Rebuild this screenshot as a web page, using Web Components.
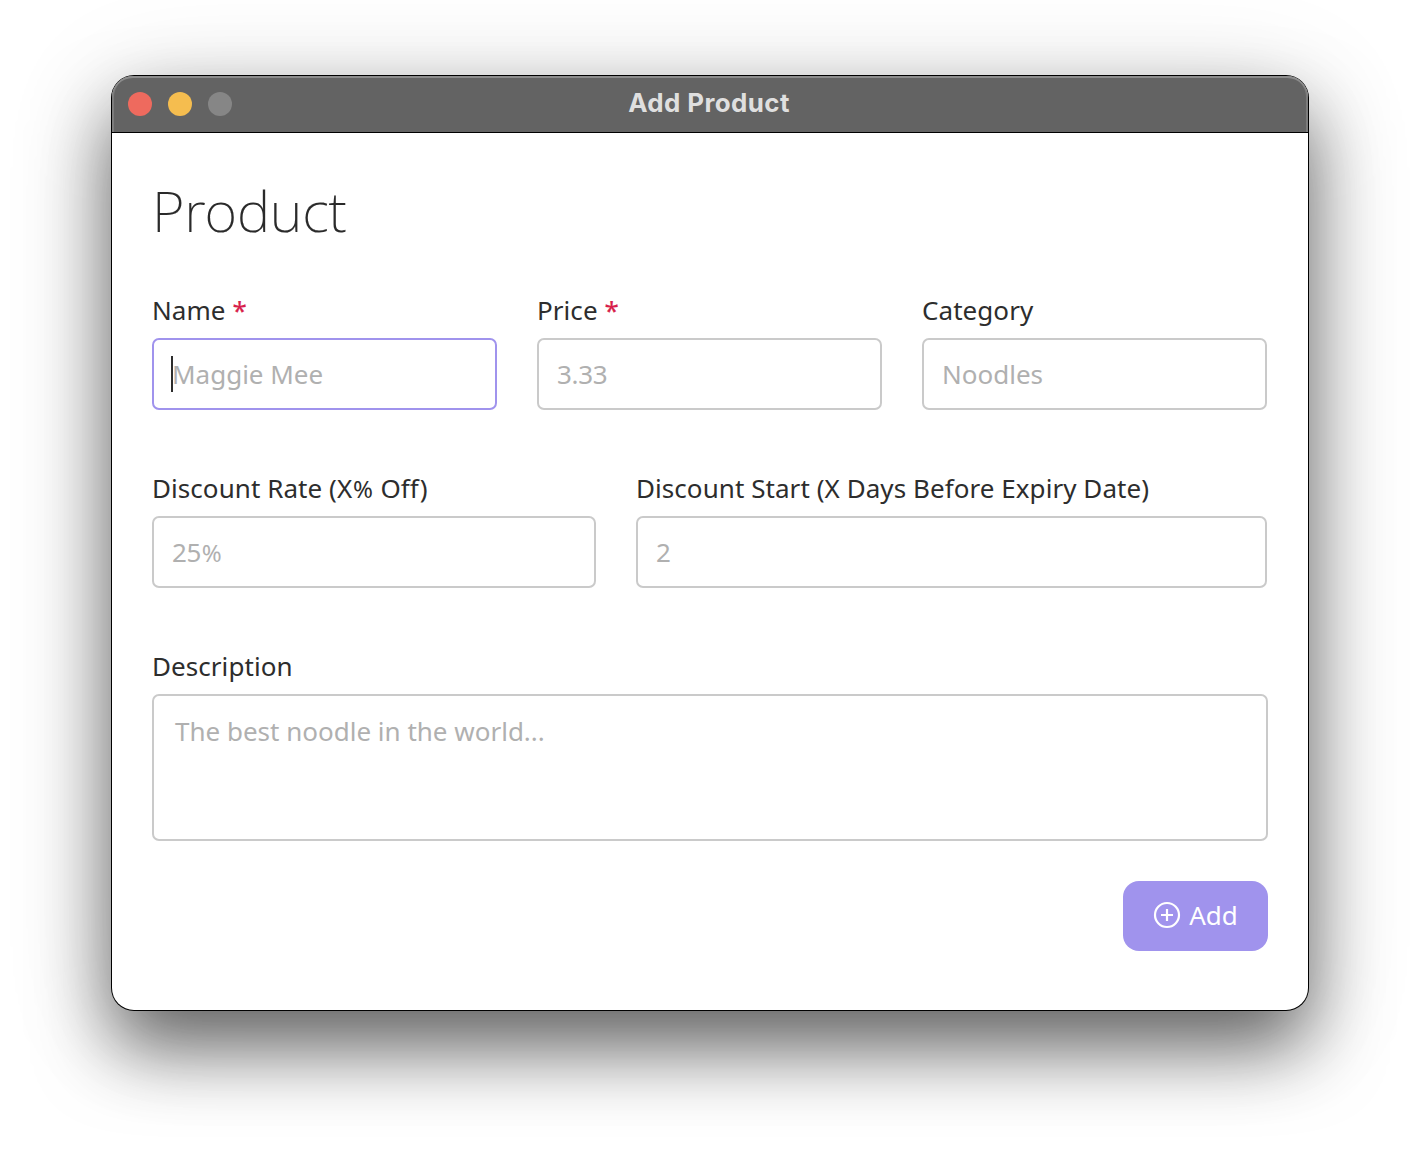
<!DOCTYPE html>
<html lang="en"><head><meta charset="utf-8"><title>Add Product</title>
<style>
body{margin:0;background:#fff;font-family:"Noto Sans",sans-serif;width:1420px;height:1158px;overflow:hidden;display:flex;justify-content:center;align-items:flex-start}
app-window{margin-top:76px}
</style></head><body>
<app-window label="Add Product"><product-form></product-form></app-window>
<script>
const mount=(el,html)=>{el.attachShadow({mode:'open'}).innerHTML=html};
customElements.define('app-window',class extends HTMLElement{constructor(){super();mount(this,`
<style>
:host{display:flex;flex-direction:column;box-sizing:border-box;width:1196px;height:934px;border-radius:22px;background:#fff;box-shadow:0 0 0 1px #000,0 38px 74px rgba(0,0,0,.57),0 14px 110px rgba(0,0,0,.15)}
header{height:57px;box-sizing:border-box;border-radius:21px 21px 0 0;background:#636363;border-bottom:1px solid #000;box-shadow:inset 0 2px 0 #8c8c8c,inset 2px 0 0 #7c7c7c,inset -2px 0 0 #7c7c7c;display:grid;grid-template-columns:1fr auto 1fr;align-items:center;padding:0 16px}
.d{display:flex;gap:16px}.d i{width:24px;height:24px;border-radius:50%}
b{font:700 25.9px/34px Inter,sans-serif;letter-spacing:.4px;color:#dfdfdf;margin:-2px 2px 0 0}
</style>
<header><div class="d"><i style="background:#ee6a5e"></i><i style="background:#f5bd4f"></i><i style="background:#868686"></i></div><b></b><span></span></header><slot></slot>`)}
connectedCallback(){this.shadowRoot.querySelector('b').textContent=this.getAttribute('label')}});
customElements.define('form-field',class extends HTMLElement{connectedCallback(){const a=n=>this.getAttribute(n).replace('%','<small>%</small>');mount(this,`
<style>
:host{display:flex;flex-direction:column;min-width:0;font-size:26px;color:#2d2d2d}
label{line-height:36px;height:46px;white-space:pre;letter-spacing:.06px}
small{font-size:24px;line-height:1;margin:0 .7px}
em{font-style:normal;color:#d81f4c;-webkit-text-stroke:.2px #d81f4c}
div{box-sizing:border-box;height:72px;border:2px solid #cacaca;border-radius:7px;padding:0 18px;display:flex;align-items:center;color:#b0b0b0;line-height:36px;background:#fff}
:host([active]) div{border-color:#a093ed}
:host([active]) div::before{content:"";width:2px;height:36px;background:#2d2d2d;margin:0 -1px 0 -1px}
:host([multi]) div{height:147px;align-items:flex-start;padding:17px 21px}
:host([numeric]) div{letter-spacing:-.35px}
</style><label>${a('label')}${this.hasAttribute('required')?' <em>*</em>':''}</label><div><span>${a('hint')}</span></div>`)}});
customElements.define('add-button',class extends HTMLElement{constructor(){super();mount(this,`
<style>:host{box-sizing:border-box;display:flex;align-items:center;justify-content:center;gap:8px;width:145px;height:70px;padding-bottom:2px;border-radius:16px;background:#a093ed;color:#fff;font-size:26px;line-height:36px}svg{display:block}</style>
<svg width="28" height="28" viewBox="0 0 28 28" fill="none" stroke="#fff" stroke-width="2.2"><circle cx="14" cy="14" r="12"/><path d="M14 8v12M8 14h12"/></svg><span><slot></slot></span>`)}});
customElements.define('product-form',class extends HTMLElement{constructor(){super();mount(this,`
<style>
:host{display:flex;flex-direction:column;padding:38px 40px 0}
h1{margin:0;font-weight:200;font-size:56px;line-height:78px;letter-spacing:-.15px;color:#2a2a2a;height:121px;-webkit-text-stroke:.1px #2a2a2a}
.r{display:grid;column-gap:40px;height:178px}
.a{grid-template-columns:345px 345px 345px}.b{grid-template-columns:444px 631px}
add-button{align-self:flex-end;margin-top:40px}
form-field[multi]{height:193px}
</style>
<h1>Product</h1>
<div class="r a"><form-field label="Name" hint="Maggie Mee" required active></form-field><form-field label="Price" hint="3.33" required numeric></form-field><form-field label="Category" hint="Noodles"></form-field></div>
<div class="r b"><form-field label="Discount Rate (X% Off)" hint="25%" numeric></form-field><form-field label="Discount Start (X Days Before Expiry Date)" hint="2" numeric></form-field></div>
<form-field multi label="Description" hint="The best noodle in the world..."></form-field>
<add-button>Add</add-button>`)}});
</script></body></html>
